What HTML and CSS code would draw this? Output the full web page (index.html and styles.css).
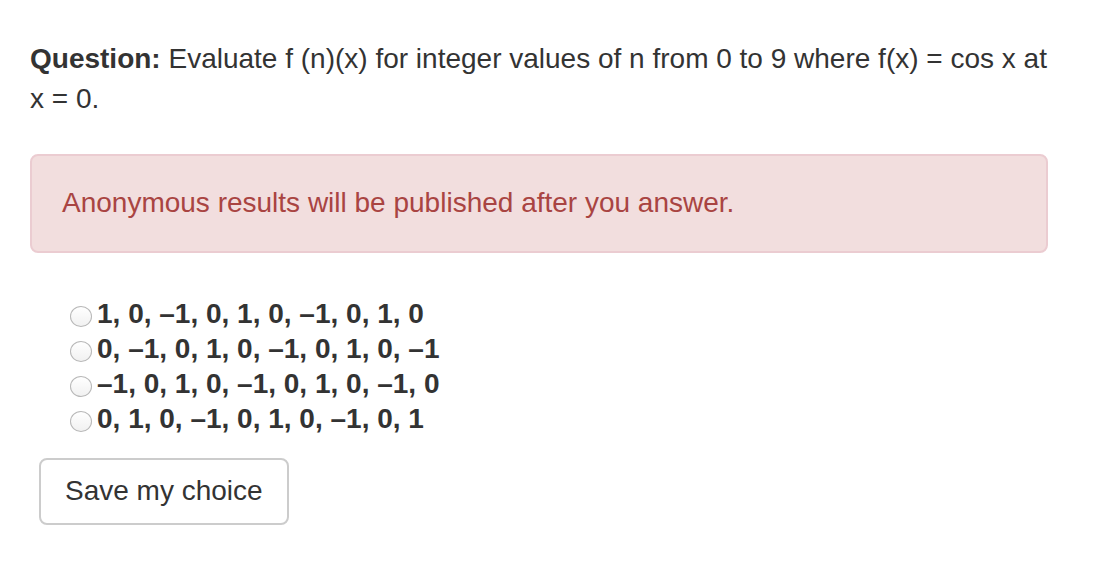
FILE: index.html
```html
<!DOCTYPE html>
<html lang="en">
<head>
    <meta charset="UTF-8">
    <title>Poll question</title>
    <link rel="stylesheet" href="styles.css">
</head>
<body>
    <div class="container">
        <p class="question"><strong>Question:</strong> Evaluate f (n)(x) for integer values of n from 0 to 9 where f(x) = cos x at x = 0.</p>

        <div class="alert">Anonymous results will be published after you answer.</div>

        <form class="poll">
            <div class="choices">
                <label class="choice">
                    <input type="radio" name="answer" value="a">
                    <span>1, 0, –1, 0, 1, 0, –1, 0, 1, 0</span>
                </label>
                <label class="choice">
                    <input type="radio" name="answer" value="b">
                    <span>0, –1, 0, 1, 0, –1, 0, 1, 0, –1</span>
                </label>
                <label class="choice">
                    <input type="radio" name="answer" value="c">
                    <span>–1, 0, 1, 0, –1, 0, 1, 0, –1, 0</span>
                </label>
                <label class="choice">
                    <input type="radio" name="answer" value="d">
                    <span>0, 1, 0, –1, 0, 1, 0, –1, 0, 1</span>
                </label>
            </div>

            <button type="button" class="btn">Save my choice</button>
        </form>
    </div>
</body>
</html>
```

FILE: styles.css
```css
* {
    margin: 0;
    padding: 0;
    box-sizing: border-box;
}

body {
    background: #fff;
    color: #333;
    font-family: "Liberation Sans", Arial, Helvetica, sans-serif;
    font-size: 28px;
    line-height: 40px;
}

.container {
    width: 1018px;
    margin-left: 30px;
    padding-top: 39px;
}

.question {
    margin-bottom: 35px;
}

.alert {
    background: #f2dede;
    border: 2px solid #ebccd1;
    border-radius: 8px;
    color: #a94442;
    padding: 27px 30px 28px;
}

.choices {
    margin: 43px 0 22px 40px;
}

.choice {
    display: flex;
    align-items: flex-start;
    gap: 5px;
    font-weight: bold;
    line-height: 35px;
    cursor: pointer;
}

.choice input[type="radio"] {
    appearance: none;
    -webkit-appearance: none;
    width: 22px;
    height: 21px;
    margin-top: 10px;
    border: 1px solid #b8b8b8;
    border-radius: 50%;
    background: linear-gradient(#ffffff, #f1f1f1);
    flex-shrink: 0;
}

.choice input[type="radio"]:checked {
    background: radial-gradient(circle, #fff 0 4px, #3b8df5 5px);
    border-color: #2f7de0;
}

.btn {
    margin-left: 9px;
    background: #fff;
    border: 2px solid #ccc;
    border-radius: 8px;
    color: #333;
    font-family: inherit;
    font-size: 28px;
    line-height: 40px;
    padding: 11px 24px 12px;
    cursor: pointer;
}

.btn:hover {
    background: #e6e6e6;
    border-color: #adadad;
}
```
